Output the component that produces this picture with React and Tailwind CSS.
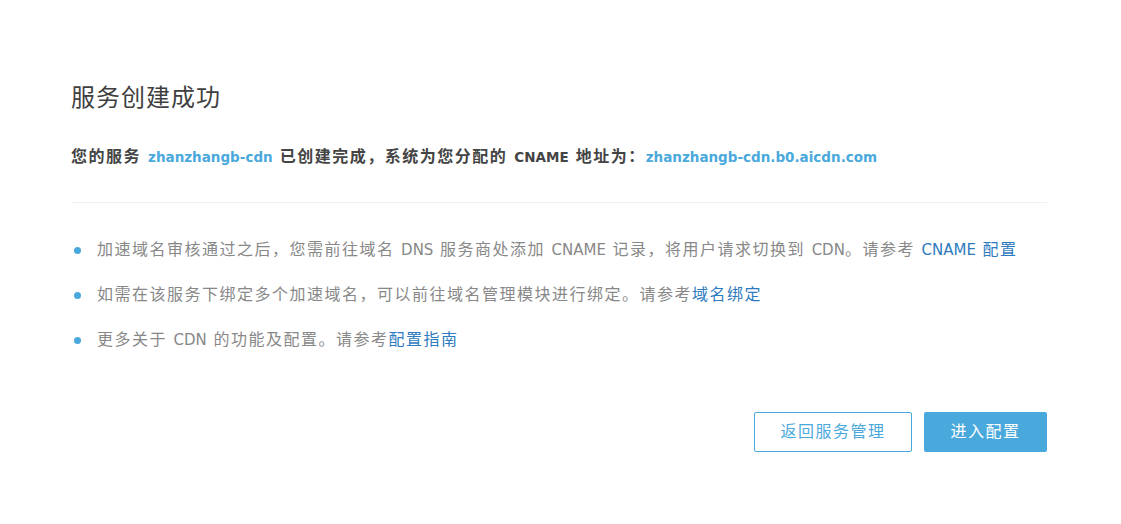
import React from "react";

// latin runs are set smaller and without tracking, CJK keeps the wider pitch
const Mixed = ({ text, latin }) =>
    text.split(/([A-Za-z0-9.\-]+)/).map((part, i) =>
        /[A-Za-z0-9]/.test(part) ? (
            <span key={i} className={latin}>
                {part}
            </span>
        ) : (
            part
        )
    );

const items = [
    {
        text: "加速域名审核通过之后，您需前往域名 DNS 服务商处添加 CNAME 记录，将用户请求切换到 CDN。请参考 ",
        link: "CNAME 配置",
    },
    {
        text: "如需在该服务下绑定多个加速域名，可以前往域名管理模块进行绑定。请参考",
        link: "域名绑定",
    },
    {
        text: "更多关于 CDN 的功能及配置。请参考",
        link: "配置指南",
    },
];

const latinItem = "text-[15px] tracking-normal";
const latinBold = "text-[13.5px] tracking-normal";

const App = () => {
    return (
        <div
            className="w-[1121px] h-[524px] bg-white px-[71px] pt-[84px]"
            style={{ fontFamily: '"DejaVu Sans", "Noto Sans CJK SC", sans-serif' }}
        >
            <h1 className="text-[24px] leading-[28px] tracking-[1px] text-[#3f3f3f] font-normal">
                服务创建成功
            </h1>
            <p className="mt-[35px] text-[16px] leading-[20px] tracking-[1.5px] font-bold text-[#444]">
                <Mixed text="您的服务 " latin={latinBold} />
                <span className="text-[#4aa9dc]">
                    <Mixed text="zhanzhangb-cdn" latin={latinBold} />
                </span>
                <Mixed text=" 已创建完成，系统为您分配的 CNAME 地址为：" latin={latinBold} />
                <span className="text-[#4aa9dc]">
                    <Mixed text="zhanzhangb-cdn.b0.aicdn.com" latin={latinBold} />
                </span>
            </p>
            <div className="mt-[35px] w-[976px] border-t border-[#f0f0f0]"></div>
            <ul className="mt-[37px] flex flex-col gap-[25px]">
                {items.map((item, i) => (
                    <li
                        key={i}
                        className="flex items-center text-[16px] leading-[20px] tracking-[1.5px] text-[#888]"
                    >
                        <span className="ml-[3px] mr-[16px] w-[7px] h-[7px] shrink-0 rounded-full bg-[#4aa9dc]"></span>
                        <span>
                            <Mixed text={item.text} latin={latinItem} />
                            <a className="text-[#2e7bbf]">
                                <Mixed text={item.link} latin={latinItem} />
                            </a>
                        </span>
                    </li>
                ))}
            </ul>
            <div className="mt-[62px] w-[976px] flex justify-end gap-[12px]">
                <button className="w-[158px] h-[40px] border border-[#4aa9dc] rounded-[2px] text-[#4aa9dc] text-[16px] tracking-[1.5px] bg-white">
                    返回服务管理
                </button>
                <button className="w-[123px] h-[40px] rounded-[2px] bg-[#4aa9dc] text-white text-[16px] tracking-[1.5px]">
                    进入配置
                </button>
            </div>
        </div>
    );
};

export default App;
